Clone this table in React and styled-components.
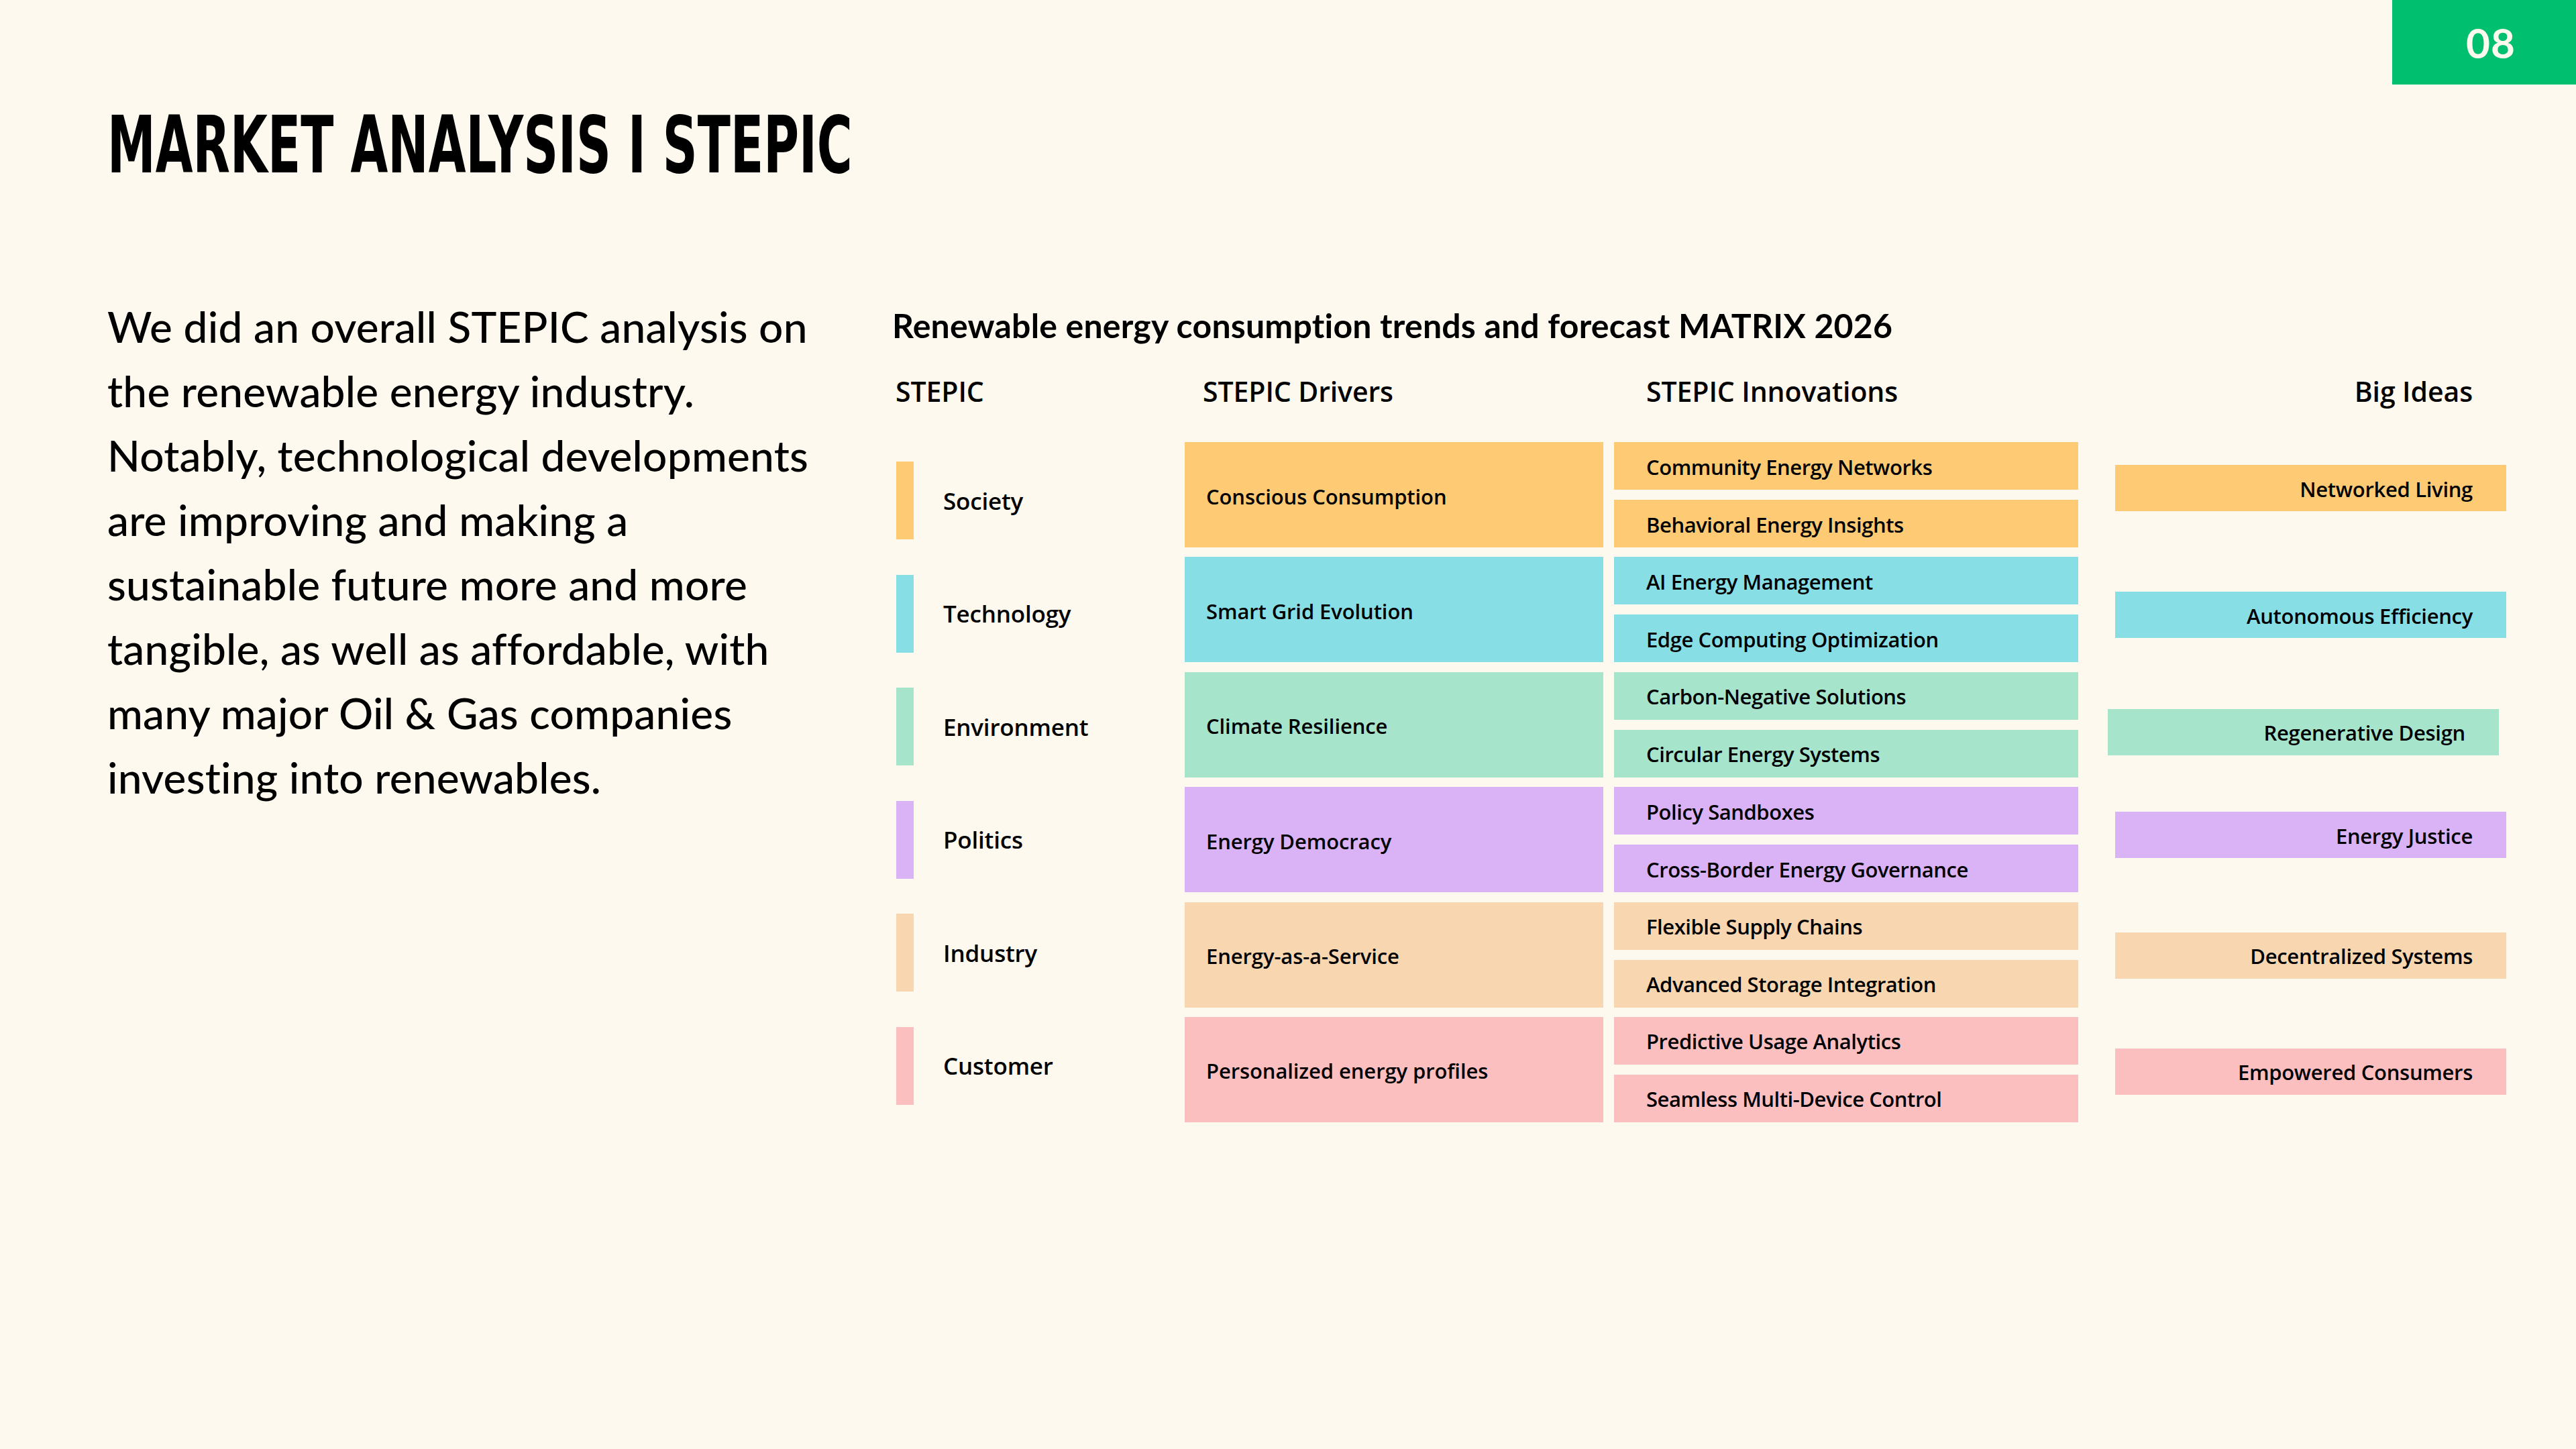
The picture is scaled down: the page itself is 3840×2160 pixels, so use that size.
import React from 'react';
import styled, { createGlobalStyle } from 'styled-components';

const Global = createGlobalStyle`
  html, body { margin: 0; padding: 0; background: #FEF9EE; }
  #root { width: 3840px; height: 2160px; }
`;

const Slide = styled.div`
  position: relative;
  width: 3840px;
  height: 2160px;
  box-sizing: border-box;
  padding: 147px 0 0 160px;
  background: #FEF9EE;
  color: #000;
  overflow: hidden;
  display: flex;
  flex-direction: column;
`;

const PageBadge = styled.div`
  position: absolute;
  top: 0;
  right: 0;
  width: 274px;
  height: 126px;
  box-sizing: border-box;
  padding-left: 20px;
  background: #00BF6F;
  color: #FEF9EE;
  display: flex;
  align-items: center;
  justify-content: center;
  font-family: "Lato", "Open Sans", sans-serif;
  font-weight: 700;
  font-size: 62px;
  letter-spacing: 1px;
`;

const Title = styled.h1`
  margin: 0;
  height: 140px;
  line-height: 140px;
  font-family: "Liberation Sans Narrow", "DejaVu Sans Condensed", "Liberation Sans", sans-serif;
  font-weight: 700;
  font-size: 117px;
  white-space: nowrap;
  transform: scaleX(0.685);
  transform-origin: left center;
`;

const Body = styled.div`
  display: flex;
  align-items: flex-start;
  margin-top: 152px;
`;

const Intro = styled.p`
  margin: 0;
  width: 1175px;
  flex: none;
  font-family: "Lato", "Open Sans", sans-serif;
  font-weight: 500;
  font-size: 64px;
  line-height: 96px;
  letter-spacing: 0.2px;
  white-space: nowrap;
`;

const MatrixPanel = styled.section`
  display: flex;
  flex-direction: column;
  padding-top: 16px;
`;

const Subtitle = styled.h2`
  margin: 0 0 0 -5px;
  font-family: "Lato", "Open Sans", sans-serif;
  font-weight: 700;
  font-size: 50px;
  line-height: 60px;
  letter-spacing: 0.2px;
  white-space: nowrap;
`;

const HeaderRow = styled.div`
  display: flex;
  margin-top: 43px;
  height: 50px;
  align-items: center;
  font-family: "Open Sans", sans-serif;
  font-weight: 600;
  font-size: 41px;
  letter-spacing: -0.1px;
  white-space: nowrap;
`;

const HeadCell = styled.div`
  flex: none;
  box-sizing: border-box;
  width: ${p => p.$w}px;
  margin-left: ${p => p.$ml || 0}px;
  padding-left: ${p => p.$pl || 0}px;
  padding-right: ${p => p.$pr || 0}px;
  text-align: ${p => p.$right ? 'right' : 'left'};
`;

const Grid = styled.div`
  display: flex;
  align-items: flex-start;
  margin-top: 51px;
  font-family: "Open Sans", sans-serif;
  font-weight: 600;
  white-space: nowrap;
`;

const Column = styled.div`
  flex: none;
  box-sizing: border-box;
  width: ${p => p.$w}px;
  margin-left: ${p => p.$ml || 0}px;
  padding-top: ${p => p.$pt || 0}px;
  display: flex;
  flex-direction: column;
  gap: ${p => p.$gap}px;
`;

const Category = styled.div`
  height: 116px;
  display: flex;
  align-items: center;
  padding-left: 1px;
`;

const ColorBar = styled.span`
  width: 26px;
  height: 100%;
  background: ${p => p.$c};
`;

const CategoryLabel = styled.span`
  margin-left: 44px;
  font-size: 35px;
  letter-spacing: -0.2px;
`;

const Driver = styled.div`
  height: 157px;
  box-sizing: border-box;
  padding: 4px 0 0 32px;
  display: flex;
  align-items: center;
  background: ${p => p.$c};
  font-size: 31px;
  letter-spacing: -0.1px;
`;

const InnovationPair = styled.div`
  height: 157px;
  display: flex;
  flex-direction: column;
  justify-content: space-between;
`;

const Innovation = styled.div`
  height: 71px;
  box-sizing: border-box;
  padding: 2px 0 0 48px;
  display: flex;
  align-items: center;
  background: ${p => p.$c};
  font-size: 31px;
  letter-spacing: -0.45px;
`;

const IdeaSlot = styled.div`
  height: 157px;
  display: flex;
  align-items: center;
`;

const BigIdea = styled.div`
  width: 100%;
  height: 69px;
  box-sizing: border-box;
  padding: 2px 50px 0 0;
  display: flex;
  align-items: center;
  justify-content: flex-end;
  background: ${p => p.$c};
  font-size: 31px;
  letter-spacing: -0.3px;
  transform: translate(${p => p.$dx || 0}px, ${p => p.$dy || 0}px);
`;

const rows = [
  {
    cat: 'Society', color: '#FECB74', driver: 'Conscious Consumption',
    innov: ['Community Energy Networks', 'Behavioral Energy Insights'],
    idea: 'Networked Living', dx: 0, dy: -10,
  },
  {
    cat: 'Technology', color: '#87DFE5', driver: 'Smart Grid Evolution',
    innov: ['AI Energy Management', 'Edge Computing Optimization'],
    idea: 'Autonomous Efficiency', dx: 0, dy: 8,
  },
  {
    cat: 'Environment', color: '#A6E4CC', driver: 'Climate Resilience',
    innov: ['Carbon-Negative Solutions', 'Circular Energy Systems'],
    idea: 'Regenerative Design', dx: -11, dy: 11,
  },
  {
    cat: 'Politics', color: '#DAB2F6', driver: 'Energy Democracy',
    innov: ['Policy Sandboxes', 'Cross-Border Energy Governance'],
    idea: 'Energy Justice', dx: 0, dy: -7,
  },
  {
    cat: 'Industry', color: '#F7D6B0', driver: 'Energy-as-a-Service',
    innov: ['Flexible Supply Chains', 'Advanced Storage Integration'],
    idea: 'Decentralized Systems', dx: 0, dy: 1,
  },
  {
    cat: 'Customer', color: '#FCBFC0', driver: 'Personalized energy profiles',
    innov: ['Predictive Usage Analytics', 'Seamless Multi-Device Control'],
    idea: 'Empowered Consumers', dx: 0, dy: 3,
  },
];

export default function App() {
  return (
    <>
      <Global />
      <Slide>
        <PageBadge>08</PageBadge>
        <Title>MARKET ANALYSIS I STEPIC</Title>
        <Body>
          <Intro>
            We did an overall STEPIC analysis on<br />
            the renewable energy industry.<br />
            Notably, technological developments<br />
            are improving and making a<br />
            sustainable future more and more<br />
            tangible, as well as affordable, with<br />
            many major Oil &amp; Gas companies<br />
            investing into renewables.
          </Intro>
          <MatrixPanel>
            <Subtitle>Renewable energy consumption trends and forecast MATRIX 2026</Subtitle>
            <HeaderRow>
              <HeadCell $w={431}>STEPIC</HeadCell>
              <HeadCell $w={624} $pl={27}>STEPIC Drivers</HeadCell>
              <HeadCell $w={692} $ml={16} $pl={48}>STEPIC Innovations</HeadCell>
              <HeadCell $w={583} $ml={55} $pr={50} $right>Big Ideas</HeadCell>
            </HeaderRow>
            <Grid>
              <Column $w={431} $pt={29} $gap={52.6}>
                {rows.map(r => (
                  <Category key={r.cat}>
                    <ColorBar $c={r.color} />
                    <CategoryLabel>{r.cat}</CategoryLabel>
                  </Category>
                ))}
              </Column>
              <Column $w={624} $gap={14.4}>
                {rows.map(r => (
                  <Driver key={r.driver} $c={r.color}>{r.driver}</Driver>
                ))}
              </Column>
              <Column $w={692} $ml={16} $gap={14.4}>
                {rows.map(r => (
                  <InnovationPair key={r.cat}>
                    {r.innov.map(t => (
                      <Innovation key={t} $c={r.color}>{t}</Innovation>
                    ))}
                  </InnovationPair>
                ))}
              </Column>
              <Column $w={583} $ml={55} $gap={14.4}>
                {rows.map(r => (
                  <IdeaSlot key={r.idea}>
                    <BigIdea $c={r.color} $dx={r.dx} $dy={r.dy}>{r.idea}</BigIdea>
                  </IdeaSlot>
                ))}
              </Column>
            </Grid>
          </MatrixPanel>
        </Body>
      </Slide>
    </>
  );
}
